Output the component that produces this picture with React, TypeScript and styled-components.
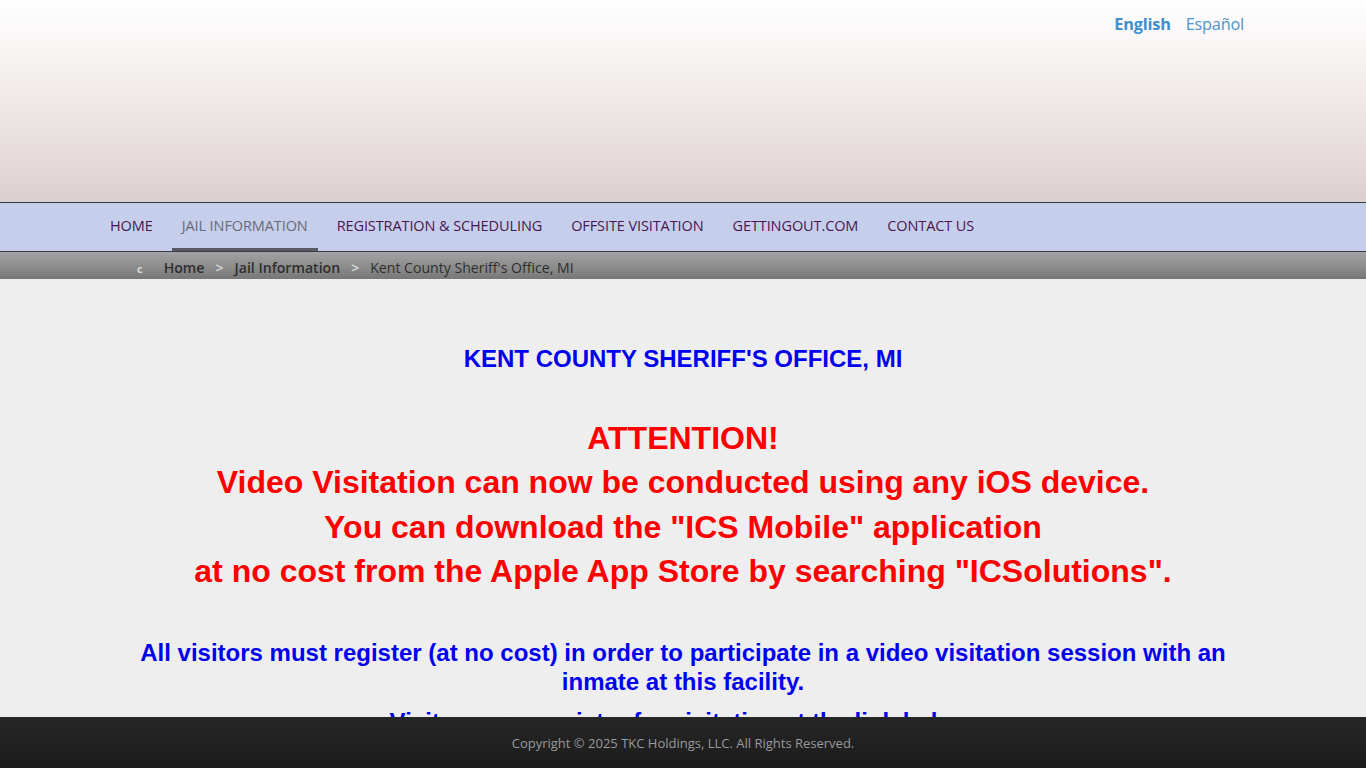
import React from 'react'
import styled, { createGlobalStyle } from 'styled-components'

const GlobalStyle = createGlobalStyle`
  html, body {
    margin: 0;
    padding: 0;
    background: #eeeeee;
  }
  body {
    font-family: 'Open Sans', 'DejaVu Sans', sans-serif;
  }
`

const Page = styled.div`
  min-height: 768px;
  background: #eeeeee;
  padding-bottom: 51px;
  box-sizing: border-box;
`

const Header = styled.header`
  height: 203px;
  background: linear-gradient(to bottom, #ffffff 0%, #f3eeed 40%, #dcd0cf 100%);
  border-bottom: 1px solid #3a3a48;
  box-sizing: border-box;
`

const LangBar = styled.div`
  display: flex;
  justify-content: flex-end;
  gap: 15px;
  padding: 13px 122px 0 0;
`

const Lang = styled.a<{ active?: boolean }>`
  font-family: 'Open Sans', 'DejaVu Sans', sans-serif;
  font-size: 16.3px;
  font-weight: ${(p) => (p.active ? 700 : 400)};
  color: ${(p) => (p.active ? '#3d8fd0' : '#4e93cc')};
  text-decoration: none;
  letter-spacing: -0.2px;
`

const Nav = styled.nav`
  height: 48px;
  background: #c5cfeb;
  border-bottom: 1px solid #3a3a48;
  display: flex;
  align-items: stretch;
  padding-left: 100px;
`

const NavItem = styled.a<{ active?: boolean }>`
  display: flex;
  align-items: center;
  padding: 0 10px;
  margin-right: 9px;
  font-family: 'Open Sans', 'DejaVu Sans', sans-serif;
  font-size: 14.5px;
  letter-spacing: -0.1px;
  color: ${(p) => (p.active ? '#6a6a78' : '#4a1650')};
  text-decoration: none;
  border-bottom: 3px solid ${(p) => (p.active ? '#5a5a66' : 'transparent')};
  box-sizing: border-box;
  height: 48px;
`

const Crumbs = styled.div`
  height: 27px;
  background: linear-gradient(to bottom, #a3a3a3 0%, #8a8a8a 60%, #777777 100%);
  display: flex;
  align-items: center;
  padding: 3px 0 0 137px;
  box-sizing: border-box;
  gap: 11px;
  font-family: 'Open Sans', 'DejaVu Sans', sans-serif;
  font-size: 14.1px;
`

const HomeGlyph = styled.span`
  color: #d8d8d8;
  font-size: 11px;
  font-weight: 700;
  margin-right: 10px;
  padding-top: 3px;
`

const CrumbLink = styled.a`
  color: #2e2e2e;
  font-weight: 600;
  text-decoration: none;
`

const Sep = styled.span`
  color: #cfcfcf;
  font-weight: 700;
`

const CrumbCurrent = styled.span`
  color: #2e2e2e;
`

const Content = styled.main`
  text-align: center;
  font-family: 'Liberation Sans', Arial, sans-serif;
  font-weight: 700;
  padding: 66px 120px 0;
`

const Facility = styled.h2`
  margin: 0;
  color: #0000ee;
  font-size: 24px;
  line-height: 28px;
`

const Attention = styled.div`
  margin-top: 43px;
  color: #ff0000;
  font-size: 32px;
  line-height: 44.3px;
`

const Notice = styled.p`
  margin: 0;
  color: #0000ee;
  font-size: 24px;
  line-height: 29px;
  & + & {
    margin-top: 11px;
  }
`

const NoticeBlock = styled.div`
  margin-top: 45px;
`

const Footer = styled.footer`
  position: fixed;
  left: 0;
  right: 0;
  bottom: 0;
  height: 51px;
  background: linear-gradient(to bottom, #262626, #1c1c1c);
  display: flex;
  align-items: center;
  justify-content: center;
  font-family: 'Open Sans', 'DejaVu Sans', sans-serif;
  font-size: 13px;
  color: #9a9a9a;
`

const navItems = [
  'HOME',
  'JAIL INFORMATION',
  'REGISTRATION & SCHEDULING',
  'OFFSITE VISITATION',
  'GETTINGOUT.COM',
  'CONTACT US',
]

export default function App() {
  return (
    <Page>
      <GlobalStyle />
      <Header>
        <LangBar>
          <Lang href="#" active>
            English
          </Lang>
          <Lang href="#">Español</Lang>
        </LangBar>
      </Header>
      <Nav>
        {navItems.map((item) => (
          <NavItem key={item} href="#" active={item === 'JAIL INFORMATION'}>
            {item}
          </NavItem>
        ))}
      </Nav>
      <Crumbs>
        <HomeGlyph>c</HomeGlyph>
        <CrumbLink href="#">Home</CrumbLink>
        <Sep>&gt;</Sep>
        <CrumbLink href="#">Jail Information</CrumbLink>
        <Sep>&gt;</Sep>
        <CrumbCurrent>Kent County Sheriff&apos;s Office, MI</CrumbCurrent>
      </Crumbs>
      <Content>
        <Facility>KENT COUNTY SHERIFF&apos;S OFFICE, MI</Facility>
        <Attention>
          ATTENTION!
          <br />
          Video Visitation can now be conducted using any iOS device.
          <br />
          You can download the &quot;ICS Mobile&quot; application
          <br />
          at no cost from the Apple App Store by searching &quot;ICSolutions&quot;.
        </Attention>
        <NoticeBlock>
          <Notice>
            All visitors must register (at no cost) in order to participate in a video
            visitation session with an inmate at this facility.
          </Notice>
          <Notice>Visitors may register for visitation at the link below.</Notice>
        </NoticeBlock>
      </Content>
      <Footer>Copyright © 2025 TKC Holdings, LLC. All Rights Reserved.</Footer>
    </Page>
  )
}
